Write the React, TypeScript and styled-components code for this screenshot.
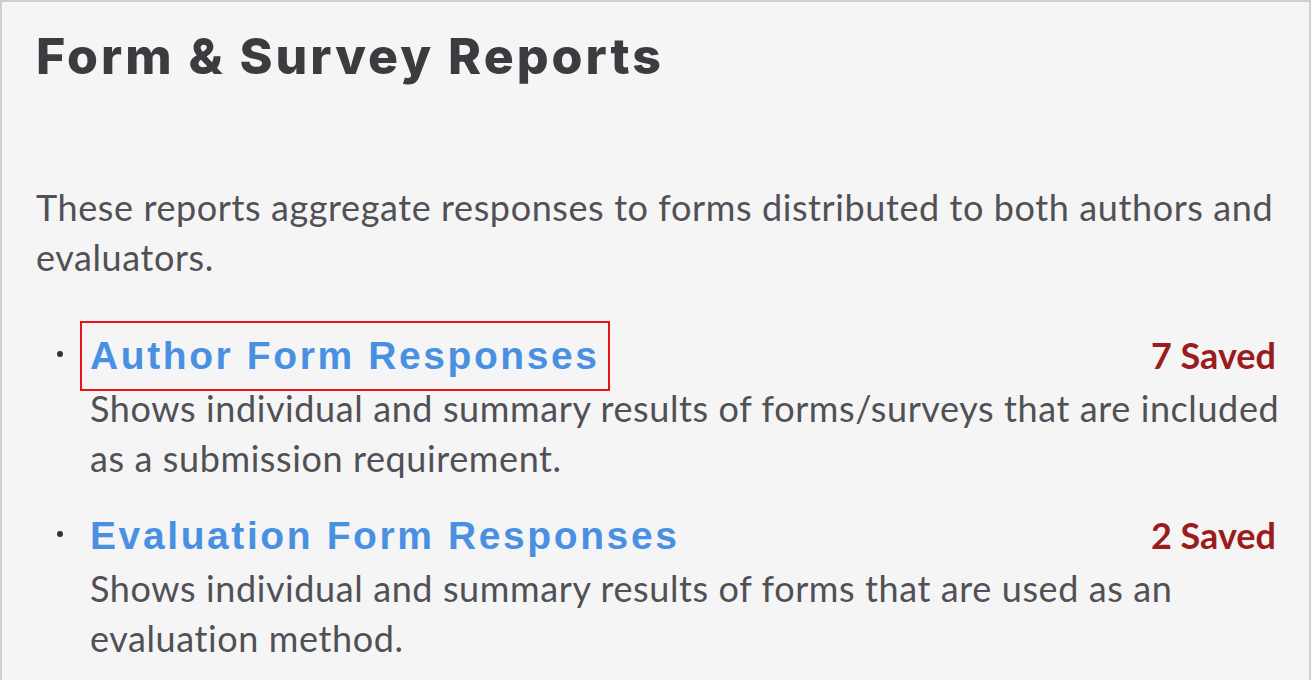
import styled, { createGlobalStyle } from 'styled-components';

const GlobalStyle = createGlobalStyle`
    html, body {
        margin : 0;
        padding : 0;
        background-color : #f5f5f5;
    }
`

type Report = {
    title : string;
    saved : number;
    desc : string;
    highlighted? : boolean;
};

const reports : Report[] = [
    {
        title : 'Author Form Responses',
        saved : 7,
        desc : 'Shows individual and summary results of forms/surveys that are included as a submission requirement.',
        highlighted : true,
    },
    {
        title : 'Evaluation Form Responses',
        saved : 2,
        desc : 'Shows individual and summary results of forms that are used as an evaluation method.',
    },
];

const App = () => {
    return (
        <>
            <GlobalStyle />
            <StPanel>
                <StHeading>Form &amp; Survey Reports</StHeading>
                <StIntro>These reports aggregate responses to forms distributed to both authors and evaluators.</StIntro>
                <StList>
                    {reports.map((report) => (
                        <StItem key = {report.title}>
                            <StItemHead>
                                <StReportLink href = "#" $highlighted = {report.highlighted}>{report.title}</StReportLink>
                                <StSaved>{report.saved} Saved</StSaved>
                            </StItemHead>
                            <StDesc>{report.desc}</StDesc>
                        </StItem>
                    ))}
                </StList>
            </StPanel>
        </>
    )
}

export default App;

const StPanel = styled.div`
    box-sizing : border-box;
    width : 1311px;
    height : 680px;
    overflow : hidden;
    background-color : #f5f5f5;
    border : 2px solid #cfcfcf;
    border-bottom : none;
    padding : 22px 28px 0 34px;
`

const StHeading = styled.h1`
    margin : 0;
    font-family : Inter, "Open Sans", sans-serif;
    font-size : 50px;
    font-weight : 800;
    line-height : 64px;
    letter-spacing : 3px;
    color : #3b3b40;
`

const StIntro = styled.p`
    margin : 94px 0 0 0;
    font-family : Lato, "Open Sans", sans-serif;
    font-size : 36px;
    line-height : 50px;
    letter-spacing : 0.6px;
    color : #505055;
`

const StList = styled.ul`
    list-style : none;
    margin : 49px 0 0 0;
    padding : 0 0 0 54px;
`

const StItem = styled.li`
    position : relative;
    margin-bottom : 28px;
    &::before {
        content : '';
        position : absolute;
        left : -33px;
        top : 20px;
        width : 6px;
        height : 6px;
        border-radius : 50%;
        background-color : #333;
    }
`

const StItemHead = styled.div`
    display : flex;
    justify-content : space-between;
    align-items : baseline;
    padding-right : 5px;
`

const StReportLink = styled.a<{ $highlighted? : boolean }>`
    font-family : "Liberation Sans", Arial, sans-serif;
    font-size : 39px;
    font-weight : 700;
    line-height : 50px;
    letter-spacing : 2.6px;
    color : #4a90e2;
    text-decoration : none;
    outline : ${(p) => p.$highlighted ? '2px solid #e8141c' : 'none'};
    outline-offset : 8px;
`

const StSaved = styled.span`
    font-family : Lato, "Open Sans", sans-serif;
    font-size : 36px;
    font-weight : 700;
    color : #9b1c1c;
`

const StDesc = styled.p`
    margin : 2px 0 0 0;
    font-family : Lato, "Open Sans", sans-serif;
    font-size : 36px;
    line-height : 50px;
    letter-spacing : 0.6px;
    color : #505055;
`
